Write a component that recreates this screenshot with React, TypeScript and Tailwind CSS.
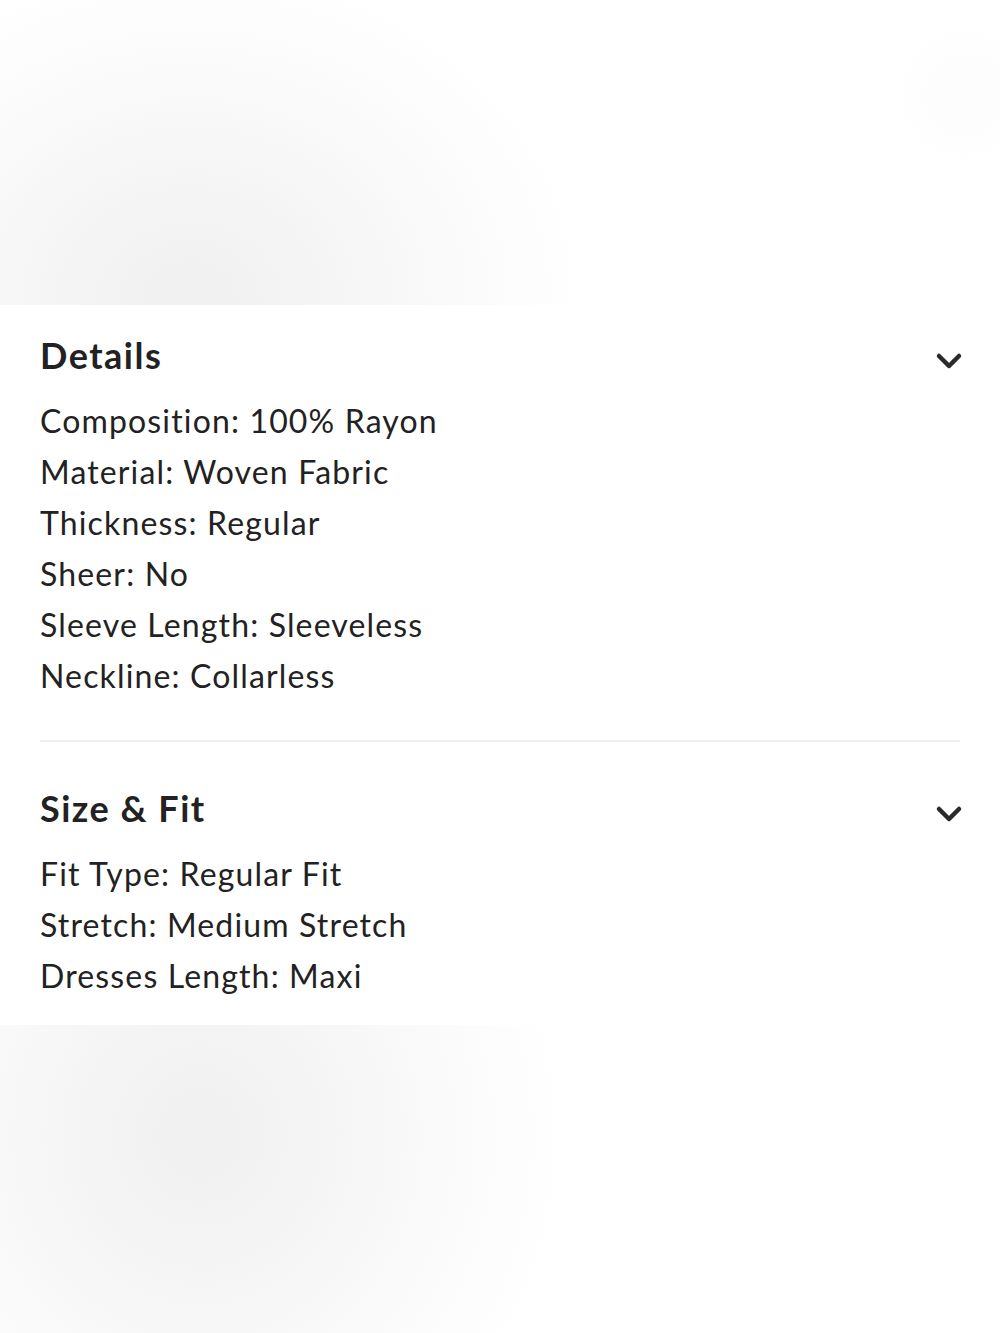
import { ChevronDown } from 'lucide-react';

const sections = [
  {
    title: 'Details',
    rows: [
      'Composition: 100% Rayon',
      'Material: Woven Fabric',
      'Thickness: Regular',
      'Sheer: No',
      'Sleeve Length: Sleeveless',
      'Neckline: Collarless',
    ],
  },
  {
    title: 'Size & Fit',
    rows: ['Fit Type: Regular Fit', 'Stretch: Medium Stretch', 'Dresses Length: Maxi'],
  },
];

const Section = ({ title, rows }: { title: string; rows: string[] }) => (
  <div>
    <div className="flex items-center justify-between h-[44px]">
      <h2 className="text-[36px] font-bold text-[#222] tracking-[1.5px]">{title}</h2>
      <ChevronDown className="w-[40px] h-[40px] mr-[-9px] mt-[12px] text-[#2a2a2a]" strokeWidth={2.7} />
    </div>
    <ul className="mt-[18px]">
      {rows.map((row) => (
        <li key={row} className="text-[32px] leading-[51px] text-[#222] tracking-[1.15px]">
          {row}
        </li>
      ))}
    </ul>
  </div>
);

export default function App() {
  return (
    <div className="w-[1000px] h-[1333px] flex flex-col bg-white font-['Lato','Liberation_Sans',sans-serif]">
      <div className="h-[305px] shrink-0 bg-[radial-gradient(ellipse_400px_340px_at_190px_300px,#f0f0f0,#f4f4f4_30%,#fafafa_65%,#ffffff_100%)] relative overflow-hidden">
        <div className="absolute right-[-50px] top-[20px] w-[170px] h-[150px] rounded-full bg-[radial-gradient(circle,#fcfcfc,#ffffff_70%)]" />
      </div>
      <main className="flex-1 px-10 pt-[28px]">
        <Section {...sections[0]} />
        <div className="h-[2px] bg-[#efefef] mt-[39px] mb-[44px]" />
        <Section {...sections[1]} />
      </main>
      <div className="h-[308px] shrink-0 bg-[radial-gradient(ellipse_370px_400px_at_200px_110px,#f0f0f0,#f4f4f4_30%,#fafafa_65%,#ffffff_100%)]" />
    </div>
  );
}
